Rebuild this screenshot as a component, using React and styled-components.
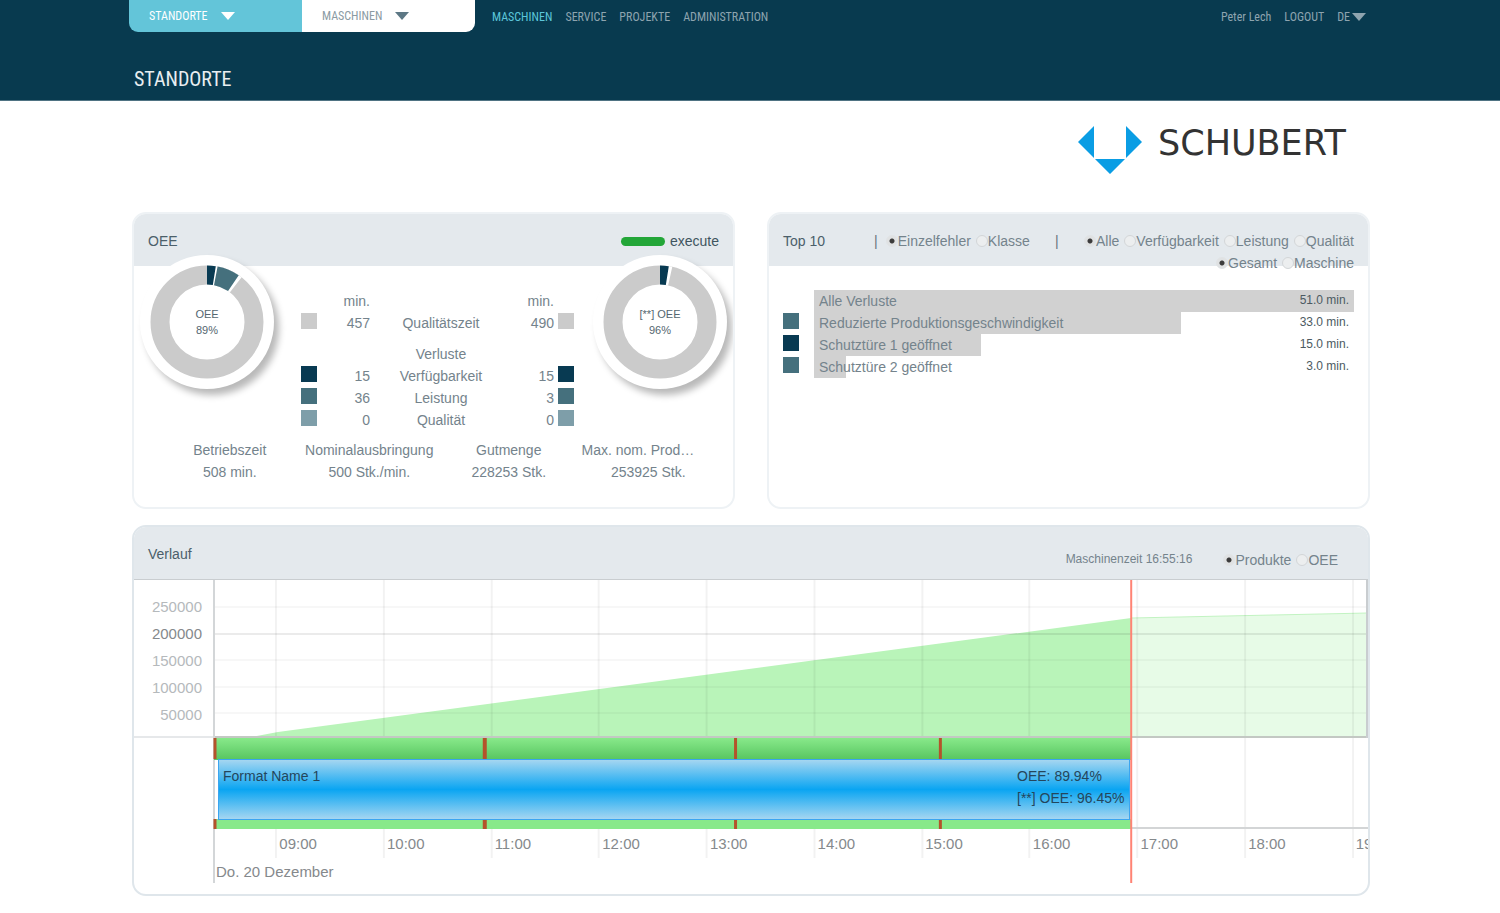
import { useState } from "react";
import styled, { createGlobalStyle } from "styled-components";

const GlobalStyle = createGlobalStyle`
  * {
    box-sizing: border-box;
  }
  body {
    margin: 0;
    background: #fff;
    color: #74838c;
    font-family: "Liberation Sans", Arial, sans-serif;
    font-size: 14px;
    line-height: 22px;
  }
  button, input {
    font: inherit;
  }
`;

const narrow = `"Roboto Condensed", "Liberation Sans", sans-serif`;

const Header = styled.header`
  height: 101px;
  padding: 0 134px 0 129px;
  background: #083a4f;
  border-bottom: 1px solid #4f7383;
  font-family: ${narrow};
  font-size: 12px;
`;

const TopBar = styled.div`
  display: flex;
  height: 32px;
  align-items: center;
`;

const Tabs = styled.div`
  display: flex;
  align-self: stretch;
  border-radius: 0 0 9px 9px;
  overflow: hidden;
`;

const Tab = styled.button`
  display: flex;
  align-items: center;
  gap: 13px;
  width: 173px;
  padding: 0 20px;
  border: 0;
  background: ${(p) => (p.$active ? "#63c5d9" : "#fff")};
  color: ${(p) => (p.$active ? "#fff" : "#8b9ba3")};
  fill: ${(p) => (p.$active ? "#fff" : "#5d7885")};
`;

const Nav = styled.nav`
  display: flex;
  gap: 13px;
  margin-left: 17px;
  padding-top: 1px;
`;

const NavLink = styled.a`
  color: ${(p) => (p.$active ? "#5cc6da" : "#8ea4af")};
  text-decoration: none;
`;

const UserMenu = styled.div`
  display: flex;
  gap: 13px;
  margin-left: auto;
  padding-top: 1px;
  color: #8ea4af;
`;

const LanguageButton = styled.button`
  display: flex;
  align-items: center;
  gap: 2px;
  padding: 0;
  border: 0;
  background: none;
  color: inherit;
  fill: #8ea4af;
`;

const PageTitle = styled.h1`
  margin: 35px 0 0 5px;
  color: #e8eef1;
  font-size: 20px;
  font-weight: 400;
  line-height: 24px;
`;

const Main = styled.main`
  padding: 24px 130px 18px 132px;
`;

const Brand = styled.div`
  display: flex;
  align-items: center;
  gap: 16px;
  width: 292px;
  height: 50px;
  margin: 0 0 37px auto;
  color: #333;
  font-family: "DejaVu Sans", sans-serif;
  font-size: 35px;
  line-height: 38px;
`;

const BrandName = styled.span`
  padding-bottom: 14px;
`;

const Panels = styled.div`
  display: grid;
  grid-template-columns: 1fr 1fr;
  gap: 16px 32px;
`;

const Panel = styled.section`
  min-width: 0;
  min-height: ${(p) => (p.$wide ? "371px" : "297px")};
  grid-column: ${(p) => (p.$wide ? "1 / -1" : "auto")};
  border: 2px solid ${(p) => (p.$wide ? "#dfe6eb" : "#eef2f5")};
  border-radius: 14px;
  overflow: hidden;
`;

const PanelHeader = styled.div`
  display: flex;
  align-items: ${(p) => (p.$top ? "flex-start" : "center")};
  height: 52px;
  padding: ${(p) => (p.$top ? "16px 14px 0" : "2px 14px 0")};
  background: #e4e9ed;
`;

const PanelTitle = styled.h2`
  margin: 0;
  color: #4b5f6a;
  font-size: 14px;
  font-weight: 400;
`;

const Status = styled.span`
  display: flex;
  align-items: center;
  gap: 5px;
  margin-left: auto;
  color: #3f5560;

  &::before {
    content: "";
    width: 44px;
    height: 9px;
    border-radius: 5px;
    background: #23a638;
  }
`;

const OeeBody = styled.div`
  display: flex;
  justify-content: space-between;
  align-items: flex-start;
  padding: 0 6px;
`;

const DonutDisc = styled.div`
  display: grid;
  place-items: center;
  width: 134px;
  height: 134px;
  margin-top: -11px;
  border-radius: 50%;
  background: #fff;
  box-shadow: 5px 6px 7px rgba(0, 0, 0, 0.28);

  > * {
    grid-area: 1 / 1;
  }
`;

const DonutLabel = styled.div`
  color: #54666f;
  font-size: 11px;
  line-height: 16px;
  text-align: center;
`;

const Legend = styled.table`
  width: 281px;
  margin-top: 24px;
  border-collapse: collapse;
  table-layout: fixed;

  td {
    height: 22px;
    padding: 0;
    text-align: right;
    vertical-align: top;
  }
  td:nth-child(3) {
    text-align: center;
  }
  tr:nth-child(3) td {
    height: 31px;
    padding-top: 9px;
  }
`;

const Swatch = styled.span`
  display: block;
  flex: none;
  width: 16px;
  height: 16px;
  margin: 1px 0 0 auto;
  background: ${(p) => p.$color};
`;

const Stats = styled.dl`
  display: grid;
  grid-template-columns: repeat(4, 1fr);
  margin: 8px 15px 0 26px;
`;

const Stat = styled.div`
  text-align: center;

  dt {
    padding-left: ${(p) => (p.$clipped ? "3px" : "0")};
    text-align: ${(p) => (p.$clipped ? "left" : "center")};
    white-space: nowrap;
  }
  dd {
    margin: 0;
  }
`;

const Filters = styled.div`
  display: flex;
  flex: 1;
  align-items: flex-start;
  justify-content: space-between;
  margin-left: 49px;
`;

const FilterGroup = styled.div`
  display: flex;
`;

const Divider = styled.span`
  color: #66757e;
`;

const FirstDivider = styled(Divider)`
  margin-right: 8px;
`;

const FilterColumn = styled.div`
  display: flex;
  flex-direction: column;
  align-items: flex-end;
`;

const RadioRow = styled.div`
  display: flex;
  gap: 5px;
`;

const RadioLabel = styled.label`
  display: flex;
  align-items: center;
  white-space: nowrap;
`;

const Radio = styled.input`
  appearance: none;
  width: 12px;
  height: 12px;
  margin: 0;
  border: 1px solid #d3d6d8;
  border-radius: 50%;
  background: #eceeef;

  &:checked {
    border-color: #e0e3e5;
    background: radial-gradient(circle, #3c3c3c 0 2px, #e0e2e3 3px);
  }
`;

const LossList = styled.ul`
  margin: 24px 14px 0;
  padding: 0;
  list-style: none;
`;

const LossRow = styled.li`
  display: flex;
  gap: 15px;
`;

const LossMark = styled.span`
  flex: none;
  width: 16px;
  height: 16px;
  margin-top: 1px;
  background: ${(p) => p.$color};
`;

const LossBar = styled.div`
  display: flex;
  flex: 1;
  justify-content: space-between;
  padding: 0 5px;
  background: linear-gradient(#d1d1d1, #d1d1d1) no-repeat;
`;

const LossValue = styled.span`
  color: #4c5a62;
  font-size: 12px;
  line-height: 20px;
`;

const MachineTime = styled.span`
  margin: 10px 31px 0 auto;
  font-size: 12px;
`;

const SeriesFilter = styled.div`
  margin: 12px 16px 0 0;
`;

const Chart = styled.div`
  display: flex;
  border-top: 1px solid #c9cdd0;
`;

const YAxis = styled.div`
  flex: none;
  width: 79px;
  height: 158px;
  padding: 13px 11px 0 0;
  border-bottom: 2px solid #e6e8ea;
  color: #b5b9bc;
  font-size: 15px;
  line-height: 27px;
  text-align: right;
`;

const Tick = styled.div`
  color: ${(p) => (p.$major ? "#85898c" : "inherit")};
`;

const Plot = styled.div`
  position: relative;
  flex: 1;
  min-width: 0;
  padding-top: 179px;
  overflow: hidden;
`;

const PlotDrawing = styled.svg`
  position: absolute;
  top: 0;
  left: 0;
  width: 100%;
  height: 304px;
`;

const FormatBar = styled.div`
  position: relative;
  display: flex;
  justify-content: space-between;
  width: 79%;
  height: 61px;
  margin-left: 5px;
  padding: 5px 5px 0 4px;
  border: 1px solid #3ba5f0;
  background: linear-gradient(#a5d6f1, #0aa5f2 50%, #a5d6f1);
  color: #24465c;
`;

const Hours = styled.div`
  display: flex;
  margin-top: 13px;
  color: #85898c;
  font-size: 15px;

  &::before {
    content: "";
    flex: 0 0 5.4%;
  }
`;

const Hour = styled.span`
  flex: 0 0 9.32%;
  padding-left: 4px;
`;

const DateLabel = styled.div`
  margin: 6px 0 0 3px;
  color: #85898c;
  font-size: 15px;
`;

const losses = [
  { name: "Alle Verluste", value: "51.0 min.", share: 100, color: "transparent" },
  { name: "Reduzierte Produktionsgeschwindigkeit", value: "33.0 min.", share: 68, color: "#45707d" },
  { name: "Schutztüre 1 geöffnet", value: "15.0 min.", share: 31, color: "#083a52" },
  { name: "Schutztüre 2 geöffnet", value: "3.0 min.", share: 6, color: "#45707d" },
];

const legend = [
  { left: "min.", right: "min." },
  { color: "#cbcbcb", left: "457", label: "Qualitätszeit", right: "490" },
  { label: "Verluste" },
  { color: "#083a52", left: "15", label: "Verfügbarkeit", right: "15" },
  { color: "#45707d", left: "36", label: "Leistung", right: "3" },
  { color: "#7e9ea9", left: "0", label: "Qualität", right: "0" },
];

const stats = [
  { label: "Betriebszeit", value: "508 min." },
  { label: "Nominalausbringung", value: "500 Stk./min." },
  { label: "Gutmenge", value: "228253 Stk." },
  { label: "Max. nom. Prod…", value: "253925 Stk.", clipped: true },
];

const hours = ["09:00", "10:00", "11:00", "12:00", "13:00", "14:00", "15:00", "16:00", "17:00", "18:00", "19:00"];
const ticks = [250000, 200000, 150000, 100000, 50000];
const stops = [0, 270, 521, 726];

function Caret() {
  return (
    <svg width="14" height="8" viewBox="0 0 14 8" aria-hidden="true">
      <path d="M0 0h14L7 8z" />
    </svg>
  );
}

function RadioGroup({ name, options }) {
  const [selected, setSelected] = useState(options[0]);

  return (
    <RadioRow role="radiogroup" aria-label={name}>
      {options.map((option) => (
        <RadioLabel key={option}>
          <Radio
            type="radio"
            name={name}
            checked={selected === option}
            onChange={() => setSelected(option)}
          />
          {option}
        </RadioLabel>
      ))}
    </RadioRow>
  );
}

function Donut({ label, value, slices }) {
  let start = 0;

  return (
    <DonutDisc>
      <svg width="114" height="114" viewBox="0 0 114 114" aria-hidden="true">
        <g transform="rotate(-90 57 57)" fill="none" strokeWidth="19">
          <circle cx="57" cy="57" r="47" stroke="#cbcbcb" />
          {slices.map((slice) => {
            const offset = start;
            start += slice.size;
            return (
              <g key={slice.color}>
                <circle
                  cx="57"
                  cy="57"
                  r="47"
                  pathLength="100"
                  stroke="#fff"
                  strokeDasharray={`${slice.size + 0.5} 100`}
                  strokeDashoffset={-offset}
                />
                <circle
                  cx="57"
                  cy="57"
                  r="47"
                  pathLength="100"
                  stroke={slice.color}
                  strokeDasharray={`${slice.size - 0.5} 100`}
                  strokeDashoffset={-offset}
                />
              </g>
            );
          })}
        </g>
      </svg>
      <DonutLabel>
        {label}
        <br />
        {value}
      </DonutLabel>
    </DonutDisc>
  );
}

function OeePanel() {
  return (
    <Panel>
      <PanelHeader>
        <PanelTitle>OEE</PanelTitle>
        <Status>execute</Status>
      </PanelHeader>
      <OeeBody>
        <Donut
          label="OEE"
          value="89%"
          slices={[
            { color: "#083a52", size: 3 },
            { color: "#45707d", size: 7 },
          ]}
        />
        <Legend>
          <colgroup>
            <col width="24" />
            <col width="53" />
            <col width="142" />
            <col width="42" />
            <col width="20" />
          </colgroup>
          <tbody>
            {legend.map((row, i) => (
              <tr key={i}>
                <td>{row.color && <Swatch $color={row.color} />}</td>
                <td>{row.left}</td>
                <td>{row.label}</td>
                <td>{row.right}</td>
                <td>{row.color && <Swatch $color={row.color} />}</td>
              </tr>
            ))}
          </tbody>
        </Legend>
        <Donut label="[**] OEE" value="96%" slices={[{ color: "#083a52", size: 3 }]} />
      </OeeBody>
      <Stats>
        {stats.map((stat) => (
          <Stat key={stat.label} $clipped={stat.clipped}>
            <dt>{stat.label}</dt>
            <dd>{stat.value}</dd>
          </Stat>
        ))}
      </Stats>
    </Panel>
  );
}

function TopTenPanel() {
  return (
    <Panel>
      <PanelHeader $top>
        <PanelTitle>Top 10</PanelTitle>
        <Filters>
          <FilterGroup>
            <FirstDivider>|</FirstDivider>
            <RadioGroup name="Ansicht" options={["Einzelfehler", "Klasse"]} />
          </FilterGroup>
          <Divider>|</Divider>
          <FilterColumn>
            <RadioGroup name="Kategorie" options={["Alle", "Verfügbarkeit", "Leistung", "Qualität"]} />
            <RadioGroup name="Bereich" options={["Gesamt", "Maschine"]} />
          </FilterColumn>
        </Filters>
      </PanelHeader>
      <LossList>
        {losses.map((loss) => (
          <LossRow key={loss.name}>
            <LossMark $color={loss.color} />
            <LossBar style={{ backgroundSize: `${loss.share}% 100%` }}>
              <span>{loss.name}</span>
              <LossValue>{loss.value}</LossValue>
            </LossBar>
          </LossRow>
        ))}
      </LossList>
    </Panel>
  );
}

function HistoryPanel() {
  return (
    <Panel $wide>
      <PanelHeader>
        <PanelTitle>Verlauf</PanelTitle>
        <MachineTime>Maschinenzeit 16:55:16</MachineTime>
        <SeriesFilter>
          <RadioGroup name="Verlauf" options={["Produkte", "OEE"]} />
        </SeriesFilter>
      </PanelHeader>
      <Chart>
        <YAxis>
          {ticks.map((tick) => (
            <Tick key={tick} $major={tick === 200000}>
              {tick}
            </Tick>
          ))}
        </YAxis>
        <Plot>
          <PlotDrawing viewBox="0 0 1156 304" preserveAspectRatio="none" aria-hidden="true">
            <defs>
              <linearGradient id="running" x1="0" y1="0" x2="0" y2="1">
                <stop offset="0" stopColor="#88e98a" />
                <stop offset="1" stopColor="#57c560" />
              </linearGradient>
            </defs>
            <path d="M38 157 L65 152 L919 38 V157z" fill="#b9f4b9" />
            <path d="M919 38 L1156 33 V157 H919z" fill="#e7fbe7" />
            <path d="M919 38 L1156 33" stroke="#c2f3c2" />
            {ticks.map((tick, i) => (
              <path
                key={tick}
                d={`M0 ${27 + Math.round(i * 26.6)}H1156`}
                stroke="#000"
                strokeWidth="2"
                strokeOpacity={tick === 200000 ? 0.08 : 0.03}
              />
            ))}
            {hours.map((hour, i) => (
              <path
                key={hour}
                d={`M${Math.round(63 + i * 107.75)} 0V278`}
                stroke="#000"
                strokeOpacity="0.05"
                strokeWidth="2"
              />
            ))}
            <path d="M0 157H1156" stroke="#c3c8c3" strokeWidth="2" />
            <path d="M0 248H1156" stroke="#d3d5d6" strokeWidth="2" />
            <path d="M1 0V304" stroke="#d3d6d8" strokeWidth="2" />
            <path d="M1155 0V158" stroke="#c9cdd0" strokeWidth="2" />
            <path d="M1 158H919V180H1z" fill="url(#running)" />
            <path d="M1 239H919V249H1z" fill="#88e98a" />
            {stops.map((x, i) => (
              <path
                key={x}
                d={`M${x + 2} 158V179M${x + 2} 239V249`}
                stroke="#b4532b"
                strokeWidth={i === 1 ? 4 : 3}
              />
            ))}
            <path d="M919 0V304" stroke="#ff8374" strokeWidth="2" />
          </PlotDrawing>
          <FormatBar>
            <span>Format Name 1</span>
            <span>
              OEE: 89.94%
              <br />
              [**] OEE: 96.45%
            </span>
          </FormatBar>
          <Hours>
            {hours.map((hour) => (
              <Hour key={hour}>{hour}</Hour>
            ))}
          </Hours>
          <DateLabel>Do. 20 Dezember</DateLabel>
        </Plot>
      </Chart>
    </Panel>
  );
}

function App() {
  return (
    <>
      <GlobalStyle />
      <Header>
        <TopBar>
          <Tabs>
            <Tab $active>
              STANDORTE
              <Caret />
            </Tab>
            <Tab>
              MASCHINEN
              <Caret />
            </Tab>
          </Tabs>
          <Nav>
            <NavLink href="#maschinen" $active>
              MASCHINEN
            </NavLink>
            <NavLink href="#service">SERVICE</NavLink>
            <NavLink href="#projekte">PROJEKTE</NavLink>
            <NavLink href="#administration">ADMINISTRATION</NavLink>
          </Nav>
          <UserMenu>
            <span>Peter Lech</span>
            <NavLink href="#logout">LOGOUT</NavLink>
            <LanguageButton>
              DE
              <Caret />
            </LanguageButton>
          </UserMenu>
        </TopBar>
        <PageTitle>STANDORTE</PageTitle>
      </Header>
      <Main>
        <Brand>
          <svg width="64" height="50" viewBox="0 0 64 50" aria-hidden="true">
            <path d="M16 1V33L0 17zM48 1V33L64 17zM17 34H47L32 49z" fill="#0a9de4" />
          </svg>
          <BrandName>SCHUBERT</BrandName>
        </Brand>
        <Panels>
          <OeePanel />
          <TopTenPanel />
          <HistoryPanel />
        </Panels>
      </Main>
    </>
  );
}

export default App;
